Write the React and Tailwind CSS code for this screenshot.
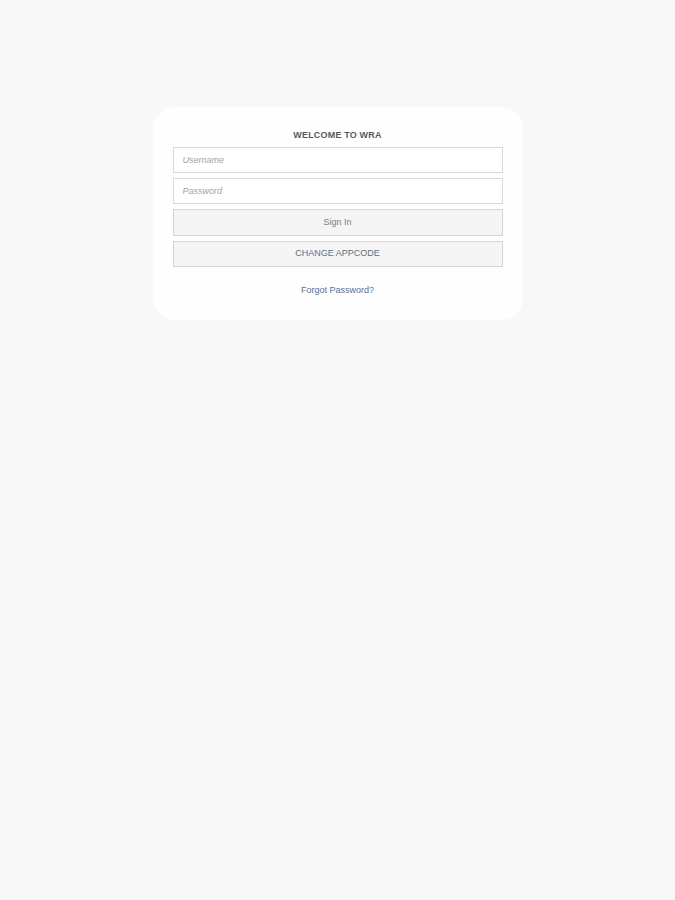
export default function App() {
  return (
    <main className="min-h-[900px] bg-[#f8f8f8] flex flex-col items-center" style={{ fontFamily: '"Liberation Sans", Arial, sans-serif' }}>
      {/* Login card */}
      <div className="mt-[107px] w-[370px] h-[213px] bg-[#fefefe] rounded-[22px] px-5 pt-[23px]">
        <h1 className="text-center text-[9px] font-bold text-[#5a5a5a] tracking-[0.02em] leading-[10px] mb-[7px]">WELCOME TO WRA</h1>
        <div className="flex flex-col gap-[5px]">
          <input
            className="h-[26px] w-full border border-[#d9d9d9] bg-white px-[9px] text-[9px] italic text-[#999] placeholder:text-[#a3a3a3] outline-none"
            placeholder="Username"
          />
          <input
            type="password"
            className="h-[26px] w-full border border-[#d9d9d9] bg-white px-[9px] text-[9px] italic text-[#999] placeholder:text-[#a3a3a3] outline-none"
            placeholder="Password"
          />
          <button className="h-[27px] w-full border border-[#d4d4d4] bg-[#f5f5f5] text-[9px] text-[#757d89]">Sign In</button>
          <button className="h-[26px] w-full border border-[#d4d4d4] bg-[#f5f5f5] text-[9px] text-[#636e7e]">CHANGE APPCODE</button>
        </div>
        <div className="text-center mt-[17px] text-[9px] leading-[12px]">
          <a className="text-[#4f72a8]" href="#">Forgot Password?</a>
        </div>
      </div>
    </main>
  );
}
